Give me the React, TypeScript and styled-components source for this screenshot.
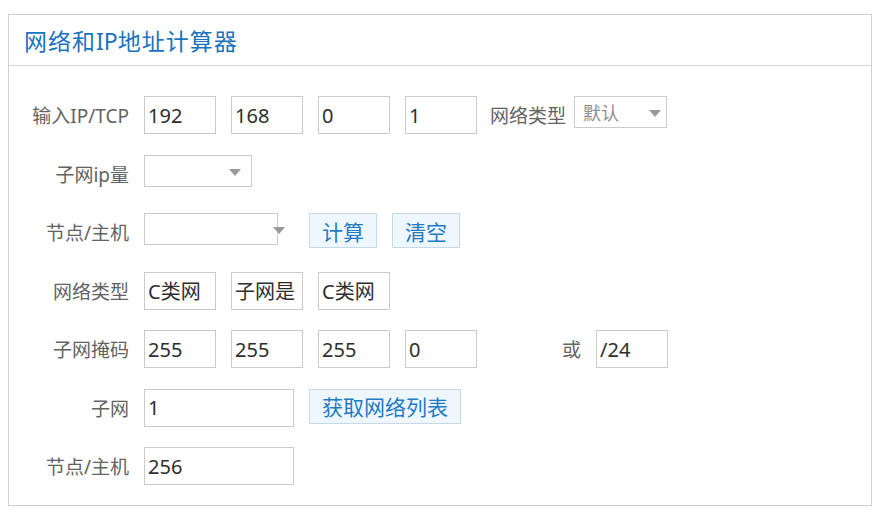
import React from 'react';
import styled, { createGlobalStyle } from 'styled-components';

const GlobalStyle = createGlobalStyle`
	body {
		margin: 8px;
		background: #fff;
		font-family: "Noto Sans", "Noto Sans CJK SC", sans-serif;
	}
`;

const Panel = styled.div`
	box-sizing: border-box;
	width: 864px;
	margin-top: 6px;
	border: 1px solid #cfcfcf;
	background: #fff;
`;

const Header = styled.div`
	height: 50px;
	display: flex;
	align-items: center;
	padding-left: 15px;
	border-bottom: 1px solid #d6d6d6;
`;

const Title = styled.h1`
	margin: 0;
	font-size: 23px;
	font-weight: normal;
	letter-spacing: 1px;
	color: #1a72bf;

	span {
		letter-spacing: 0;
	}
`;

const Body = styled.div`
	display: flex;
	flex-direction: column;
	gap: 20.5px;
	padding: 30px 0 20px 0;
`;

const Row = styled.div`
	display: flex;
	align-items: center;
	gap: 15px;
	height: 38px;
`;

const Label = styled.label<{ $width?: number }>`
	width: ${p => (p.$width ?? 120)}px;
	flex-shrink: 0;
	text-align: right;
	font-size: 19px;
	color: #636363;
	white-space: nowrap;
`;

const Field = styled.input<{ $width?: number }>`
	box-sizing: border-box;
	width: ${p => (p.$width ?? 72)}px;
	height: 38px;
	margin: 0;
	padding: 0 0 0 3px;
	border: 1px solid #cbcbcb;
	border-radius: 0;
	outline: none;
	background: #fff;
	font-family: "Noto Sans", "Noto Sans CJK SC", sans-serif;
	font-size: 20px;
	color: #2e2e2e;
`;

const SelectBox = styled.div<{ $width: number; $arrowRight?: number }>`
	position: relative;
	box-sizing: border-box;
	width: ${p => p.$width}px;
	height: 32px;
	align-self: flex-start;
	display: flex;
	align-items: center;
	padding-left: 8px;
	border: 1px solid #cbcbcb;
	background: #fff;
	font-size: 18px;
	color: #8f8f8f;

	&::after {
		content: '';
		position: absolute;
		top: 13px;
		right: ${p => (p.$arrowRight ?? 5)}px;
		border-left: 6px solid transparent;
		border-right: 6px solid transparent;
		border-top: 7px solid #9a9a9a;
	}
`;

const Button = styled.button`
	box-sizing: border-box;
	height: 35px;
	align-self: flex-start;
	margin: 0;
	padding: 0 12px;
	border: 1px solid #c5d9e8;
	border-radius: 0;
	background: #eef7fe;
	font-family: "Noto Sans", "Noto Sans CJK SC", sans-serif;
	font-size: 21px;
	color: #1f7bc5;
	cursor: pointer;
`;

const Or = styled.span`
	margin-left: 70px;
	font-size: 19px;
	color: #636363;
`;

const ip = ['192', '168', '0', '1'];
const mask = ['255', '255', '255', '0'];
const types = ['C类网', '子网是', 'C类网'];

export default function App() {
	return (
		<>
			<GlobalStyle />
			<Panel>
				<Header>
					<Title>网络和<span>IP</span>地址计算器</Title>
				</Header>
				<Body>
					<Row>
						<Label>输入IP/TCP</Label>
						{ip.map((v, i) => <Field key={i} defaultValue={v} />)}
						<Label $width={77} style={{ marginLeft: -3 }}>网络类型</Label>
						<SelectBox $width={93} style={{ marginLeft: -7 }}>默认</SelectBox>
					</Row>
					<Row>
						<Label>子网ip量</Label>
						<SelectBox $width={108} $arrowRight={10} />
					</Row>
					<Row>
						<Label>节点/主机</Label>
						<SelectBox $width={134} $arrowRight={-8} />
						<Button style={{ marginLeft: 16 }}>计算</Button>
						<Button>清空</Button>
					</Row>
					<Row>
						<Label>网络类型</Label>
						{types.map((v, i) => <Field key={i} readOnly value={v} />)}
					</Row>
					<Row>
						<Label>子网掩码</Label>
						{mask.map((v, i) => <Field key={i} defaultValue={v} />)}
						<Or>或</Or>
						<Field defaultValue="/24" />
					</Row>
					<Row>
						<Label>子网</Label>
						<Field $width={150} defaultValue="1" />
						<Button>获取网络列表</Button>
					</Row>
					<Row>
						<Label>节点/主机</Label>
						<Field $width={150} defaultValue="256" />
					</Row>
				</Body>
			</Panel>
		</>
	);
}
